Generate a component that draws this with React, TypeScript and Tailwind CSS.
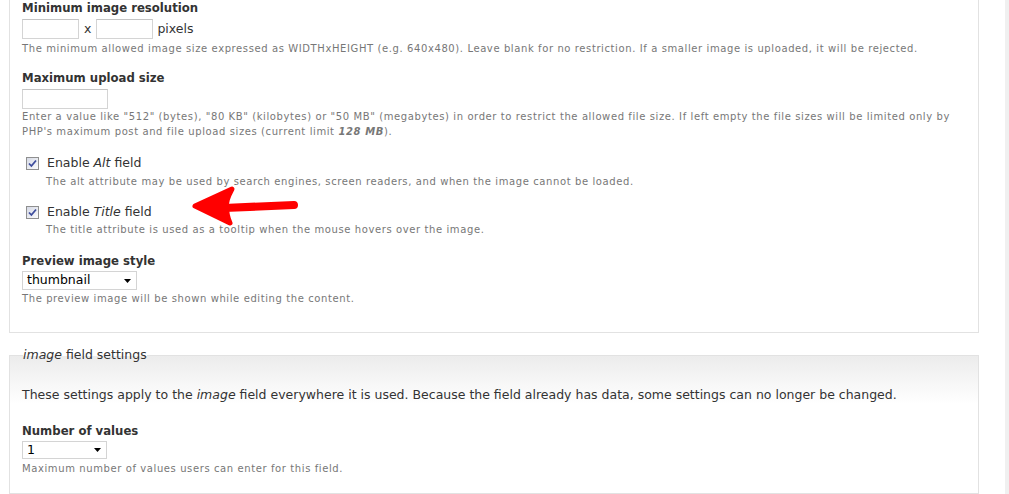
import React from "react";

function CheckBox() {
  return (
    <span className="inline-flex h-[13px] w-[13px] shrink-0 items-center justify-center border border-[#8f8f8f] bg-gradient-to-br from-[#d6dae6] to-[#fbfbfb]">
      <svg width="9" height="9" viewBox="0 0 9 9">
        <path d="M1 4.5 L3.4 7 L8 1.5" fill="none" stroke="#3d4c9c" strokeWidth="1.8" />
      </svg>
    </span>
  );
}

function Select({ value, width }: { value: string; width: string }) {
  return (
    <div
      className={
        "flex items-center justify-between border border-[#d4d4d4] bg-white pl-1 pr-[5px] text-[12.5px] leading-none text-black " +
        width
      }
    >
      <span>{value}</span>
      <svg width="7" height="4" viewBox="0 0 7 4">
        <path d="M0 0 H7 L3.5 4 Z" fill="#000" />
      </svg>
    </div>
  );
}

function Label({ children, className }: { children: React.ReactNode; className?: string }) {
  return (
    <div className={"text-[11.7px] font-bold leading-4 text-[#333] " + (className ?? "")}>
      {children}
    </div>
  );
}

function Desc({ children, className }: { children: React.ReactNode; className?: string }) {
  return (
    <div className={"text-[10px] leading-[15px] tracking-[0.6px] text-[#777] " + (className ?? "")}>
      {children}
    </div>
  );
}

export default function App() {
  return (
    <div
      className="relative flex h-[494px] w-[1009px] overflow-hidden bg-white"
      style={{ fontFamily: '"DejaVu Sans", Verdana, sans-serif' }}
    >
      <div className="flex w-[1005px] flex-col pl-[9px] pr-[26px]">
        {/* image settings fieldset (top is scrolled off) */}
        <div className="border border-t-0 border-[#e2e2e2] pb-[26px] pl-[12px]">
          <Label>Minimum image resolution</Label>
          <div className="mt-[3px] flex items-center gap-1 text-[12.5px] text-[#333]">
            <div className="h-[20px] w-[57px] border border-[#d4d4d4] border-t-[#c4c4c4]" />
            <span className="px-[1px]">x</span>
            <div className="h-[20px] w-[57px] border border-[#d4d4d4] border-t-[#c4c4c4]" />
            <span>pixels</span>
          </div>
          <Desc className="mt-[2px]">
            The minimum allowed image size expressed as WIDTHxHEIGHT (e.g. 640x480). Leave blank for no restriction. If a smaller image is uploaded, it will be rejected.
          </Desc>

          <Label className="mt-[14px]">Maximum upload size</Label>
          <div className="mt-[3px] h-[20px] w-[86px] border border-[#d4d4d4] border-t-[#c4c4c4]" />
          <Desc className="pr-[10px]">
            Enter a value like "512" (bytes), "80 KB" (kilobytes) or "50 MB" (megabytes) in order to restrict the allowed file size. If left empty the file sizes will be limited only by PHP's maximum post and file upload sizes (current limit <b className="italic">128 MB</b>).
          </Desc>

          <div className="mt-[16px] flex items-center gap-[8px] pl-[4px] text-[12.5px] leading-4 text-[#333]">
            <CheckBox />
            <span>
              Enable <em>Alt</em> field
            </span>
          </div>
          <Desc className="mt-[3px] pl-[24px]">
            The alt attribute may be used by search engines, screen readers, and when the image cannot be loaded.
          </Desc>

          <div className="mt-[15px] flex items-center gap-[8px] pl-[4px] text-[12.5px] leading-4 text-[#333]">
            <CheckBox />
            <span>
              Enable <em>Title</em> field
            </span>
          </div>
          <Desc className="mt-[2px] pl-[24px]">
            The title attribute is used as a tooltip when the mouse hovers over the image.
          </Desc>

          <Label className="mt-[16px]">Preview image style</Label>
          <Select value="thumbnail" width="mt-[2px] h-[19px] w-[115px]" />
          <Desc className="mt-[1px]">The preview image will be shown while editing the content.</Desc>
        </div>

        {/* field settings fieldset */}
        <fieldset className="mt-[14px] flex-1 border border-[#e2e2e2] bg-gradient-to-b from-[#ececec] to-white to-[48px] pl-[12px]">
          <legend className="ml-[1px] px-0 text-[12.5px] leading-4 text-[#333]">
            <em>image</em> field settings
          </legend>
          <div className="mt-[24px] text-[12.5px] leading-4 text-[#333]">
            These settings apply to the <em>image</em> field everywhere it is used. Because the field already has data, some settings can no longer be changed.
          </div>
          <Label className="mt-[20px]">Number of values</Label>
          <Select value="1" width="mt-[2px] h-[18px] w-[85px]" />
          <Desc className="mt-[2px]">Maximum number of values users can enter for this field.</Desc>
        </fieldset>
      </div>
      <div className="w-[4px] bg-[#f0f0f0]" />

      {/* red annotation arrow */}
      <svg
        className="pointer-events-none absolute left-[180px] top-[180px]"
        width="130"
        height="55"
        viewBox="0 0 130 55"
      >
        <path
          d="M15 26 L52 9 Q45 22 47 27 Q46 34 50 43 Z"
          fill="#ff0000"
          stroke="#ff0000"
          strokeWidth="5"
          strokeLinejoin="round"
        />
        <path d="M44 28 L114 25" stroke="#ff0000" strokeWidth="8" strokeLinecap="round" />
      </svg>
    </div>
  );
}
